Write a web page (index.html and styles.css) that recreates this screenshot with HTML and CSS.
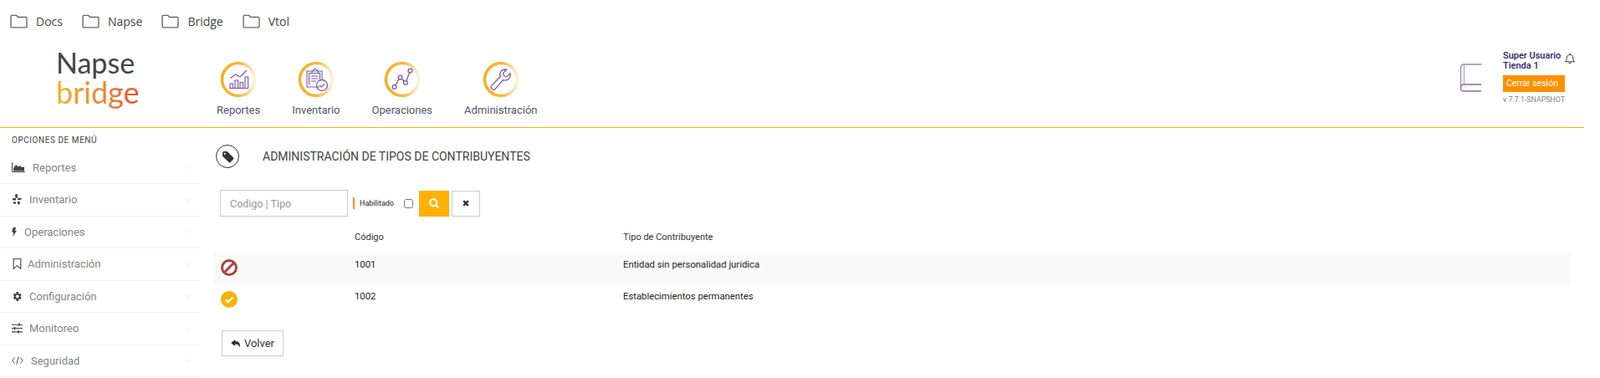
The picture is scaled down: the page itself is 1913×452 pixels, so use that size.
FILE: index.html
```html
<!DOCTYPE html>
<html>
	<head>
		<title>Napse Bridge</title>
		<meta charset="UTF-8">
		<link rel="stylesheet" href="styles.css">
	</head>
	<body>
		<svg class="defs" width="0" height="0">
			<defs>
				<linearGradient id="ring" x1="0" y1="0" x2="1" y2="0">
					<stop offset="0" stop-color="#fbac1e"/>
					<stop offset="0.55" stop-color="#fcb53a"/>
					<stop offset="1" stop-color="#fdf0d4"/>
				</linearGradient>
				<symbol id="folder" viewBox="0 0 20 16">
					<path d="M1 3.2V14a1 1 0 0 0 1 1h16a1 1 0 0 0 1-1V4.2a1 1 0 0 0-1-1H9L7.4 1.2H2a1 1 0 0 0-1 1z" fill="none" stroke="#666" stroke-width="1.3"/>
				</symbol>
				<symbol id="chev" viewBox="0 0 10 6">
					<path d="M1 1l4 4 4-4" fill="none" stroke="#f0f0f0" stroke-width="1"/>
				</symbol>
			</defs>
		</svg>

		<div class="bookmarks">
			<a class="bookmark"><svg><use href="#folder"/></svg>Docs</a>
			<a class="bookmark"><svg><use href="#folder"/></svg>Napse</a>
			<a class="bookmark"><svg><use href="#folder"/></svg>Bridge</a>
			<a class="bookmark"><svg><use href="#folder"/></svg>Vtol</a>
		</div>

		<header class="topbar">
			<div class="logo">
				<div class="logo-top">Napse</div>
				<div class="logo-bottom">bridge</div>
			</div>
			<nav class="mainnav">
				<a class="navitem">
					<svg class="navicon" viewBox="0 0 44 44">
						<circle cx="22" cy="22" r="19.5" fill="none" stroke="url(#ring)" stroke-width="3.4"/>
						<g fill="none" stroke="#7a5aa6" stroke-width="1.1">
							<path d="M11 32.5h23"/>
							<rect x="12" y="27" width="3.6" height="5.5"/>
							<rect x="18" y="23" width="3.6" height="9.5"/>
							<rect x="24" y="25.5" width="3.6" height="7"/>
							<rect x="30" y="19" width="3.6" height="13.5"/>
							<path d="M12.5 20.5l6-4.5 5.5 3 8-8" stroke-width="1.3"/>
						</g>
					</svg>
					<span>Reportes</span>
				</a>
				<a class="navitem">
					<svg class="navicon" viewBox="0 0 44 44">
						<circle cx="22" cy="22" r="19.5" fill="none" stroke="url(#ring)" stroke-width="3.4"/>
						<g fill="none" stroke="#7a5aa6" stroke-width="1.1">
							<path d="M26 31H11V12h18v10"/>
							<path d="M13.5 28.5V14.5h13V22"/>
							<path d="M17 12.5l3-3h1.5l3 3v2h-7.5z"/>
							<path d="M16 18h8M16 21h8M16 24h6"/>
							<circle cx="29" cy="29" r="6.5" stroke-width="1.3"/>
							<path d="M26 29l2.2 2.2 4-4" stroke-width="1.3"/>
						</g>
					</svg>
					<span>Inventario</span>
				</a>
				<a class="navitem">
					<svg class="navicon" viewBox="0 0 44 44">
						<circle cx="22" cy="22" r="19.5" fill="none" stroke="url(#ring)" stroke-width="3.4"/>
						<g fill="none" stroke="#7a5aa6" stroke-width="1.3">
							<circle cx="12.5" cy="31" r="2.4"/>
							<circle cx="19.5" cy="19.5" r="2.4"/>
							<circle cx="26" cy="26" r="2.4"/>
							<circle cx="31.5" cy="11.5" r="2.4"/>
							<path d="M13.8 29l4.4-7.5M21.2 21.2l3.1 3.1M26.9 23.8l3.7-10"/>
						</g>
					</svg>
					<span>Operaciones</span>
				</a>
				<a class="navitem">
					<svg class="navicon" viewBox="0 0 44 44">
						<circle cx="22" cy="22" r="19.5" fill="none" stroke="url(#ring)" stroke-width="3.4"/>
						<path d="M12 33.5c-1.5-.5-2.5-2-1.8-3.5l11-11.5c-1.5-4 1-8.5 6-8.5l1.5.3-4 4 .8 3.5 3.5.8 4-3.8c1 5.5-3.5 9.5-8.5 7.8l-9.5 11c-.8.7-2 .9-3 .4z" fill="none" stroke="#7a5aa6" stroke-width="1.3"/>
					</svg>
					<span>Administración</span>
				</a>
			</nav>
			<div class="userbox">
				<svg class="book" viewBox="0 0 28 34">
					<defs>
						<linearGradient id="bookedge" x1="0" y1="1" x2="0" y2="0">
							<stop offset="0" stop-color="#8a6a9e"/>
							<stop offset="0.6" stop-color="#f5b52a"/>
							<stop offset="1" stop-color="#fdf0c4"/>
						</linearGradient>
					</defs>
					<path d="M26.5 1H5.5C3 1 1.5 2.5 1.5 5v24" fill="none" stroke="#a284b4" stroke-width="1.3"/>
					<path d="M5.5 1v24" fill="none" stroke="#b9a2c6" stroke-width="1.3"/>
					<path d="M26.5 1v24" fill="none" stroke="url(#bookedge)" stroke-width="1.5"/>
					<path d="M26 25H4.5c-2 0-3 1.5-3 4s1 4 3 4H26" fill="none" stroke="#8a6a9e" stroke-width="1.3"/>
				</svg>
				<div class="user">
					<div class="user-top">
						<div class="username">Super Usuario<br>Tienda 1</div>
						<svg class="bell" viewBox="0 0 14 14">
							<path d="M1.5 10.8c1.3-1.2 1.8-2.5 1.8-4.5 0-2.3 1.5-3.9 3.7-3.9s3.7 1.6 3.7 3.9c0 2 .5 3.3 1.8 4.5zM5.5 12.2c.3.8 2.7.8 3 0M7 .8v1.5" fill="none" stroke="#333" stroke-width="1"/>
						</svg>
					</div>
					<a class="logout">Cerrar sesión</a>
					<div class="version">v 7.7.1-SNAPSHOT</div>
				</div>
			</div>
		</header>

		<div class="content">
			<aside class="sidebar">
				<div class="sidebar-title">OPCIONES DE MENÚ</div>
				<a class="menuitem">
					<svg class="mi mi-wide" viewBox="0 0 16 12"><path d="M.5 0v11.5H16" fill="none" stroke="#444" stroke-width="1"/><path d="M2 10.5V7l3-4 3 2.5L10 4l2 2 3-.5v5z" fill="#444"/></svg>
					<span class="gap1">Reportes</span>
					<svg class="chev"><use href="#chev"/></svg>
				</a>
				<a class="menuitem">
					<svg class="mi" viewBox="0 0 12 14"><g fill="#444"><rect x="3.5" y="0" width="3" height="5" rx="1"/><rect x="6.5" y="5" width="5" height="2.6" rx="1"/><rect x="0" y="5.5" width="4.5" height="2.6" rx="1"/><rect x="1" y="10" width="3.5" height="2.6" rx="1"/><rect x="6.5" y="9.5" width="3" height="4" rx="1"/></g></svg>
					<span class="gap2">Inventario</span>
					<svg class="chev"><use href="#chev"/></svg>
				</a>
				<a class="menuitem">
					<svg class="mi mi-thin" viewBox="0 0 7 13"><path d="M2 0h4L4.5 4.5H7L1.5 13l1-6.5H0z" fill="#444"/></svg>
					<span class="gap3">Operaciones</span>
					<svg class="chev"><use href="#chev"/></svg>
				</a>
				<a class="menuitem">
					<svg class="mi" viewBox="0 0 10 12"><path d="M1 .5h8v11L5 8l-4 3.5z" fill="none" stroke="#444" stroke-width="1"/></svg>
					<span class="gap4">Administración</span>
					<svg class="chev"><use href="#chev"/></svg>
				</a>
				<a class="menuitem">
					<svg class="mi" viewBox="0 0 24 24"><path d="M19.4 13a7.6 7.6 0 0 0 0-2l2.2-1.7-2.2-3.8-2.6 1a7.6 7.6 0 0 0-1.7-1L14.7 2h-4.400l-.4 3.500a7.6 7.6 0 0 0-1.7 1l-2.6-1-2.2 3.8L5.600 11a7.6 7.6 0 0 0 0 2l-2.2 1.7 2.2 3.8 2.6-1a7.6 7.6 0 0 0 1.7 1l.4 3.500h4.400l.4-3.500a7.6 7.6 0 0 0 1.7-1l2.6 1 2.2-3.8zM12.500 15.500a3.500 3.500 0 1 1 0-7 3.500 3.500 0 0 1 0 7z" fill="#444"/></svg>
					<span class="gap2">Configuración</span>
					<svg class="chev"><use href="#chev"/></svg>
				</a>
				<a class="menuitem">
					<svg class="mi" viewBox="0 0 12 12"><path d="M0 2h12M0 6h12M0 10h12" stroke="#444" stroke-width="1"/><path d="M7.5 .5H9v3H7.5zM2.5 4.5H4v3H2.5zM6.500 8.500H8v3H6.500z" fill="#444"/></svg>
					<span class="gap2">Monitoreo</span>
					<svg class="chev"><use href="#chev"/></svg>
				</a>
				<a class="menuitem">
					<svg class="mi mi-code" viewBox="0 0 14 10"><path d="M3.5 1.5L.8 5l2.700 3.500M10.500 1.500L13.200 5l-2.700 3.500M8.300 .5L5.700 9.500" fill="none" stroke="#444" stroke-width="1"/></svg>
					<span class="gap5">Seguridad</span>
					<svg class="chev"><use href="#chev"/></svg>
				</a>
			</aside>

			<main class="main">
				<div class="pagetitle">
					<span class="titleicon">
						<svg viewBox="0 0 16 16"><path d="M1 3.5C1 2 2 1 3.5 1H7l8 8c.6.6.6 1.400 0 2l-4 4c-.6.6-1.400.6-2 0L1 7zM4 5.200a1.200 1.200 0 1 0 0-2.400 1.200 1.200 0 0 0 0 2.400z" fill="#333" fill-rule="evenodd"/></svg>
					</span>
					<h1>ADMINISTRACIÓN DE TIPOS DE CONTRIBUYENTES</h1>
				</div>

				<form class="filters">
					<input class="search" type="text" placeholder="Codigo | Tipo">
					<label class="enabled" for="enabled">Habilitado</label>
					<input class="check" type="checkbox" id="enabled">
					<button class="btn btn-search" type="button">
						<svg viewBox="0 0 14 14"><path d="M6 1.300a4.700 4.700 0 1 0 0 9.400A4.700 4.700 0 0 0 6 1.300zM9.500 9.500l3.500 3.500" fill="none" stroke="#fff" stroke-width="2.600"/></svg>
					</button>
					<button class="btn btn-clear" type="button">
						<svg viewBox="0 0 10 10"><path d="M1.500 1.500l7 7M8.500 1.500l-7 7" fill="none" stroke="#333" stroke-width="3"/></svg>
					</button>
				</form>

				<table class="grid">
					<thead>
						<tr><th class="col-state"></th><th class="col-code">Código</th><th>Tipo de Contribuyente</th></tr>
					</thead>
					<tbody>
						<tr class="odd">
							<td>
								<svg class="state" viewBox="0 0 20 20"><circle cx="10" cy="10" r="8.5" fill="none" stroke="#a94442" stroke-width="3"/><path d="M4.500 15.500l11-11" stroke="#a94442" stroke-width="3"/></svg>
							</td>
							<td>1001</td>
							<td>Entidad sin personalidad jurídica</td>
						</tr>
						<tr>
							<td>
								<svg class="state" viewBox="0 0 20 20"><circle cx="10" cy="10" r="10" fill="#ffb000"/><path d="M5.500 10.200l3 3 6-5.700" fill="none" stroke="#fff" stroke-width="2.400"/></svg>
							</td>
							<td>1002</td>
							<td>Establecimientos permanentes</td>
						</tr>
					</tbody>
				</table>

				<button class="btn-back" type="button">
					<svg viewBox="0 0 14 12"><path d="M6 0L0 4.800l6 4.700V6.500c3.500 0 5.500 1 6.500 5 1.500-5-.5-9-6.500-9z" fill="#333"/></svg>
					Volver
				</button>
			</main>
		</div>
	</body>
</html>
```

FILE: styles.css
```css
/*Page*/
html, body{
	margin: 0;
	background: #fff;
}
body{
	font-family: "Roboto", "Liberation Sans", sans-serif;
	color: #333;
	overflow: hidden;
}
.defs{
	position: absolute;
}
a{
	color: inherit;
	text-decoration: none;
}

/*Bookmarks*/
.bookmarks{
	display: flex;
	align-items: center;
	height: 50px;
	padding-left: 12px;
	box-sizing: border-box;
	font-family: "Open Sans", sans-serif;
	font-size: 14px;
	color: #444;
}
.bookmark{
	display: flex;
	align-items: center;
	margin-right: 23px;
}
.bookmark svg{
	width: 21px;
	height: 17px;
	margin-right: 10px;
}

/*Header*/
.topbar{
	display: flex;
	width: 1894px;
	height: 103px;
	border-bottom: 1px solid #ffb000;
	box-sizing: border-box;
}
.logo{
	width: 190px;
	padding: 11px 0 0 67px;
	box-sizing: border-box;
	font-family: "Lato", sans-serif;
}
.logo-top{
	font-size: 34px;
	line-height: 27px;
	color: #444;
}
.logo-bottom{
	font-size: 36px;
	line-height: 44px;
	font-weight: 400;
	display: inline-block;
	background: linear-gradient(90deg, #fbb01e, #f4802e 60%, #ea4c34);
	-webkit-background-clip: text;
	background-clip: text;
	color: transparent;
}
.mainnav{
	display: flex;
	padding-left: 69px;
	gap: 38px;
}
.navitem{
	display: flex;
	flex-direction: column;
	align-items: center;
	padding-top: 23px;
	font-size: 13px;
	color: #55556e;
}
.navicon{
	width: 44px;
	height: 44px;
	margin-bottom: 7px;
}
.userbox{
	display: flex;
	margin-left: auto;
	padding: 11px 0 0 0;
}
.book{
	width: 28px;
	height: 34px;
	margin: 15px 24px 0 0;
}
.user{
	width: 97px;
}
.user-top{
	display: flex;
}
.username{
	font-size: 11px;
	line-height: 12px;
	font-weight: 500;
	color: #2a1a6a;
	width: 73px;
}
.bell{
	width: 14px;
	height: 14px;
	margin-top: 2px;
}
.logout{
	display: block;
	width: 74px;
	height: 20px;
	margin-top: 5px;
	padding-left: 4px;
	box-sizing: border-box;
	background: #ff9000;
	color: #fff;
	font-size: 10.5px;
	line-height: 20px;
}
.version{
	margin-top: 4px;
	font-size: 8.8px;
	color: #7a8494;
}

/*Sidebar*/
.content{
	display: flex;
}
.sidebar{
	width: 239px;
	flex-shrink: 0;
}
.sidebar-title{
	height: 28.5px;
	padding: 9px 0 0 14px;
	box-sizing: border-box;
	font-size: 10px;
	letter-spacing: .55px;
	line-height: 12px;
	color: #444;
}
.menuitem{
	display: flex;
	align-items: center;
	height: 38.5px;
	padding: 0 9px 0 14px;
	box-sizing: border-box;
	border-bottom: 1px solid #f4f4f4;
	font-size: 13px;
	color: #858585;
}
.mi{
	width: 13px;
	height: 13px;
	flex-shrink: 0;
}
.mi-wide{
	width: 16px;
	height: 12px;
}
.mi-thin{
	width: 6px;
}
.mi-code{
	width: 14px;
	height: 10px;
}
.gap1{
	margin-left: 9px;
}
.gap2{
	margin-left: 8px;
}
.gap3{
	margin-left: 9px;
}
.gap4{
	margin-left: 6px;
}
.gap5{
	margin-left: 9px;
}
.chev{
	width: 10px;
	height: 6px;
	margin-left: auto;
}

/*Main*/
.main{
	flex: 1;
	padding: 19px 36px 0 19px;
}
.pagetitle{
	display: flex;
	align-items: center;
	height: 30px;
}
.titleicon{
	display: flex;
	align-items: center;
	justify-content: center;
	width: 28px;
	height: 28px;
	border: 1px solid #333;
	border-radius: 50%;
	box-sizing: border-box;
}
.titleicon svg{
	width: 15px;
	height: 15px;
}
h1{
	margin: 0 0 0 28px;
	font-size: 14px;
	font-weight: 400;
	color: #444;
}
.filters{
	display: flex;
	align-items: center;
	margin: 25px 0 0 5px;
	height: 32px;
}
.search{
	width: 153px;
	height: 32px;
	padding: 0 11px;
	box-sizing: border-box;
	border: 1px solid #ccc;
	font-family: inherit;
	font-size: 12.5px;
	outline: none;
}
.search::placeholder{
	color: #999;
}
.enabled{
	margin-left: 6px;
	padding-left: 6px;
	border-left: 2px solid #ff9000;
	font-size: 9px;
	line-height: 14px;
	color: #222;
}
.check{
	width: 11px;
	height: 11px;
	margin: 0 7px 0 12px;
}
.btn{
	display: flex;
	align-items: center;
	justify-content: center;
	height: 31px;
	padding: 0;
	box-sizing: border-box;
}
.btn-search{
	width: 36px;
	border: none;
	background: #ffb000;
}
.btn-search svg{
	width: 12px;
	height: 12px;
}
.btn-clear{
	width: 34px;
	margin-left: 3px;
	border: 1px solid #ccc;
	background: #fff;
}
.btn-clear svg{
	width: 8px;
	height: 8px;
}

/*Table*/
.grid{
	width: 1622px;
	margin: 10px 0 0 -3px;
	border-collapse: collapse;
	font-size: 11.3px;
}
.grid th{
	height: 33px;
	padding: 0 0 4px;
	box-sizing: border-box;
	text-align: left;
	font-size: 11px;
	font-weight: 400;
	color: #333;
}
.grid td{
	height: 38px;
	padding: 0;
	vertical-align: top;
	line-height: 29px;
	font-weight: 400;
	color: #222;
}
.col-state{
	width: 169px;
}
.col-code{
	width: 321px;
}
.odd{
	background: #f9f9f9;
}
.state{
	display: block;
	width: 20px;
	height: 20px;
	margin: 8px 0 0 9px;
}
.btn-back{
	display: flex;
	align-items: center;
	justify-content: center;
	gap: 4px;
	width: 74px;
	height: 31px;
	margin: 17px 0 0 7px;
	padding: 0;
	border: 1px solid #ccc;
	background: #fff;
	font-family: inherit;
	font-size: 13px;
	color: #333;
}
.btn-back svg{
	width: 12px;
	height: 10px;
}
```
